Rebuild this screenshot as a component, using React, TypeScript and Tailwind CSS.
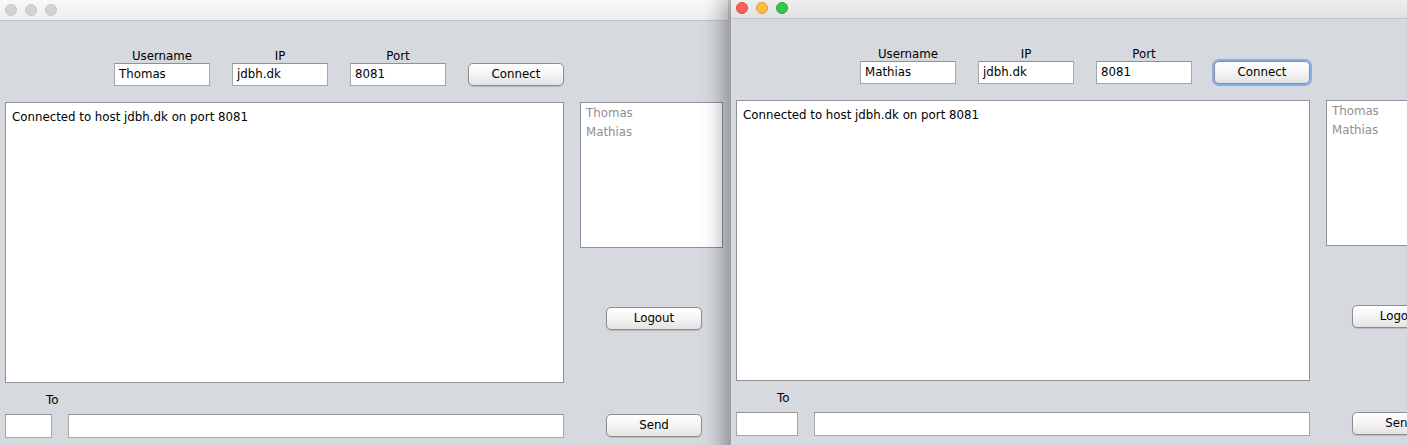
import clsx from "clsx";

const font = "font-['DejaVu_Sans',_'Liberation_Sans',_sans-serif] text-[11.8px]";

function Lights({ active }: { active?: boolean }) {
  const dots = active
    ? ["bg-[#fc605c] border-[#de4a46]", "bg-[#fdbc40] border-[#de9f34]", "bg-[#34c84a] border-[#27aa35]"]
    : ["bg-[#d3d3d3] border-[#c6c6c6]", "bg-[#d3d3d3] border-[#c6c6c6]", "bg-[#d3d3d3] border-[#c6c6c6]"];
  return (
    <div className="flex items-center gap-[8px] pl-[5px]">
      {dots.map((c, i) => (
        <span key={i} className={clsx("w-[12px] h-[12px] rounded-full border", c)} />
      ))}
    </div>
  );
}

function MacButton({ label, focus }: { label: string; focus?: boolean }) {
  return (
    <div
      className={clsx(
        "w-[96px] h-[23px] rounded-[5px] border border-[#8d8d8d] bg-linear-to-b from-white via-[#f4f4f4] to-[#e3e3e3] flex items-center justify-center text-black shadow-[0_1px_1px_rgba(0,0,0,0.15)]",
        focus && "outline-2 outline-[#86aee8] border-[#5b87c9]"
      )}
    >
      {label}
    </div>
  );
}

function Field({ value, className }: { value?: string; className?: string }) {
  return (
    <div
      className={clsx(
        "h-[23px] bg-white border border-[#a7a7a7] border-t-[#919191] px-[4px] flex items-center text-black",
        className
      )}
    >
      {value}
    </div>
  );
}

function Labeled({ label, value }: { label: string; value: string }) {
  return (
    <div className="flex flex-col items-center w-[96px]">
      <div className="h-[14px] leading-[16px] text-black">{label}</div>
      <Field value={value} className="w-[96px] mt-[1px]" />
    </div>
  );
}

function ChatWindow({ user, active }: { user: string; active?: boolean }) {
  return (
    <div className={clsx("w-full h-full flex flex-col bg-[#d6d9dd]", font)}>
      {/* title bar */}
      <div
        className={clsx(
          "h-[21px] shrink-0 flex items-center border-b border-[#c4c4c4] bg-linear-to-b",
          active ? "from-[#efefef] to-[#e2e2e2]" : "from-[#f8f8f8] to-[#efefef]"
        )}
      >
        <Lights active={active} />
      </div>

      <div className="flex flex-1 px-[5px]">
        {/* left column */}
        <div className="flex-1 flex flex-col">
          <div className="flex justify-end items-end gap-[22px] pt-[27px]">
            <Labeled label="Username" value={user} />
            <Labeled label="IP" value="jdbh.dk" />
            <Labeled label="Port" value="8081" />
            <MacButton label="Connect" focus={active} />
          </div>
          <div className="mt-[16px] h-[281px] bg-white border border-[#8e9198] px-[6px] pt-[6px] text-black">
            Connected to host jdbh.dk on port 8081
          </div>
          <div className="mt-[9px] h-[14px] leading-[16px] pl-[41px] text-black">To</div>
          <div className="flex gap-[16px] mt-[8px]">
            <Field className="flex-1 h-[24px]" />
            <Field className="w-[496px] h-[24px]" />
          </div>
        </div>

        {/* right column */}
        <div className="w-[143px] ml-[16px] flex flex-col pt-[81px] shrink-0">
          <div className="h-[146px] bg-white border border-[#8e9198] px-[5px] pt-[1px] text-[#8f8f8f] leading-[19px]">
            <div>Thomas</div>
            <div>Mathias</div>
          </div>
          <div className="mt-[59px] pl-[26px]">
            <MacButton label="Logout" />
          </div>
          <div className="mt-[84px] pl-[26px]">
            <MacButton label="Send" />
          </div>
        </div>
      </div>
    </div>
  );
}

export default function App() {
  return (
    <div className="relative w-[1407px] h-[445px] overflow-hidden bg-[#d6d9dd]">
      {/* back window */}
      <div className="absolute left-0 top-0 w-[728px] h-[470px]">
        <ChatWindow user="Thomas" />
      </div>
      {/* front window */}
      <div className="absolute left-[731px] top-[-2px] w-[743px] h-[470px] shadow-[-6px_0_22px_rgba(0,0,0,0.4)]">
        <ChatWindow user="Mathias" active />
      </div>
    </div>
  );
}
